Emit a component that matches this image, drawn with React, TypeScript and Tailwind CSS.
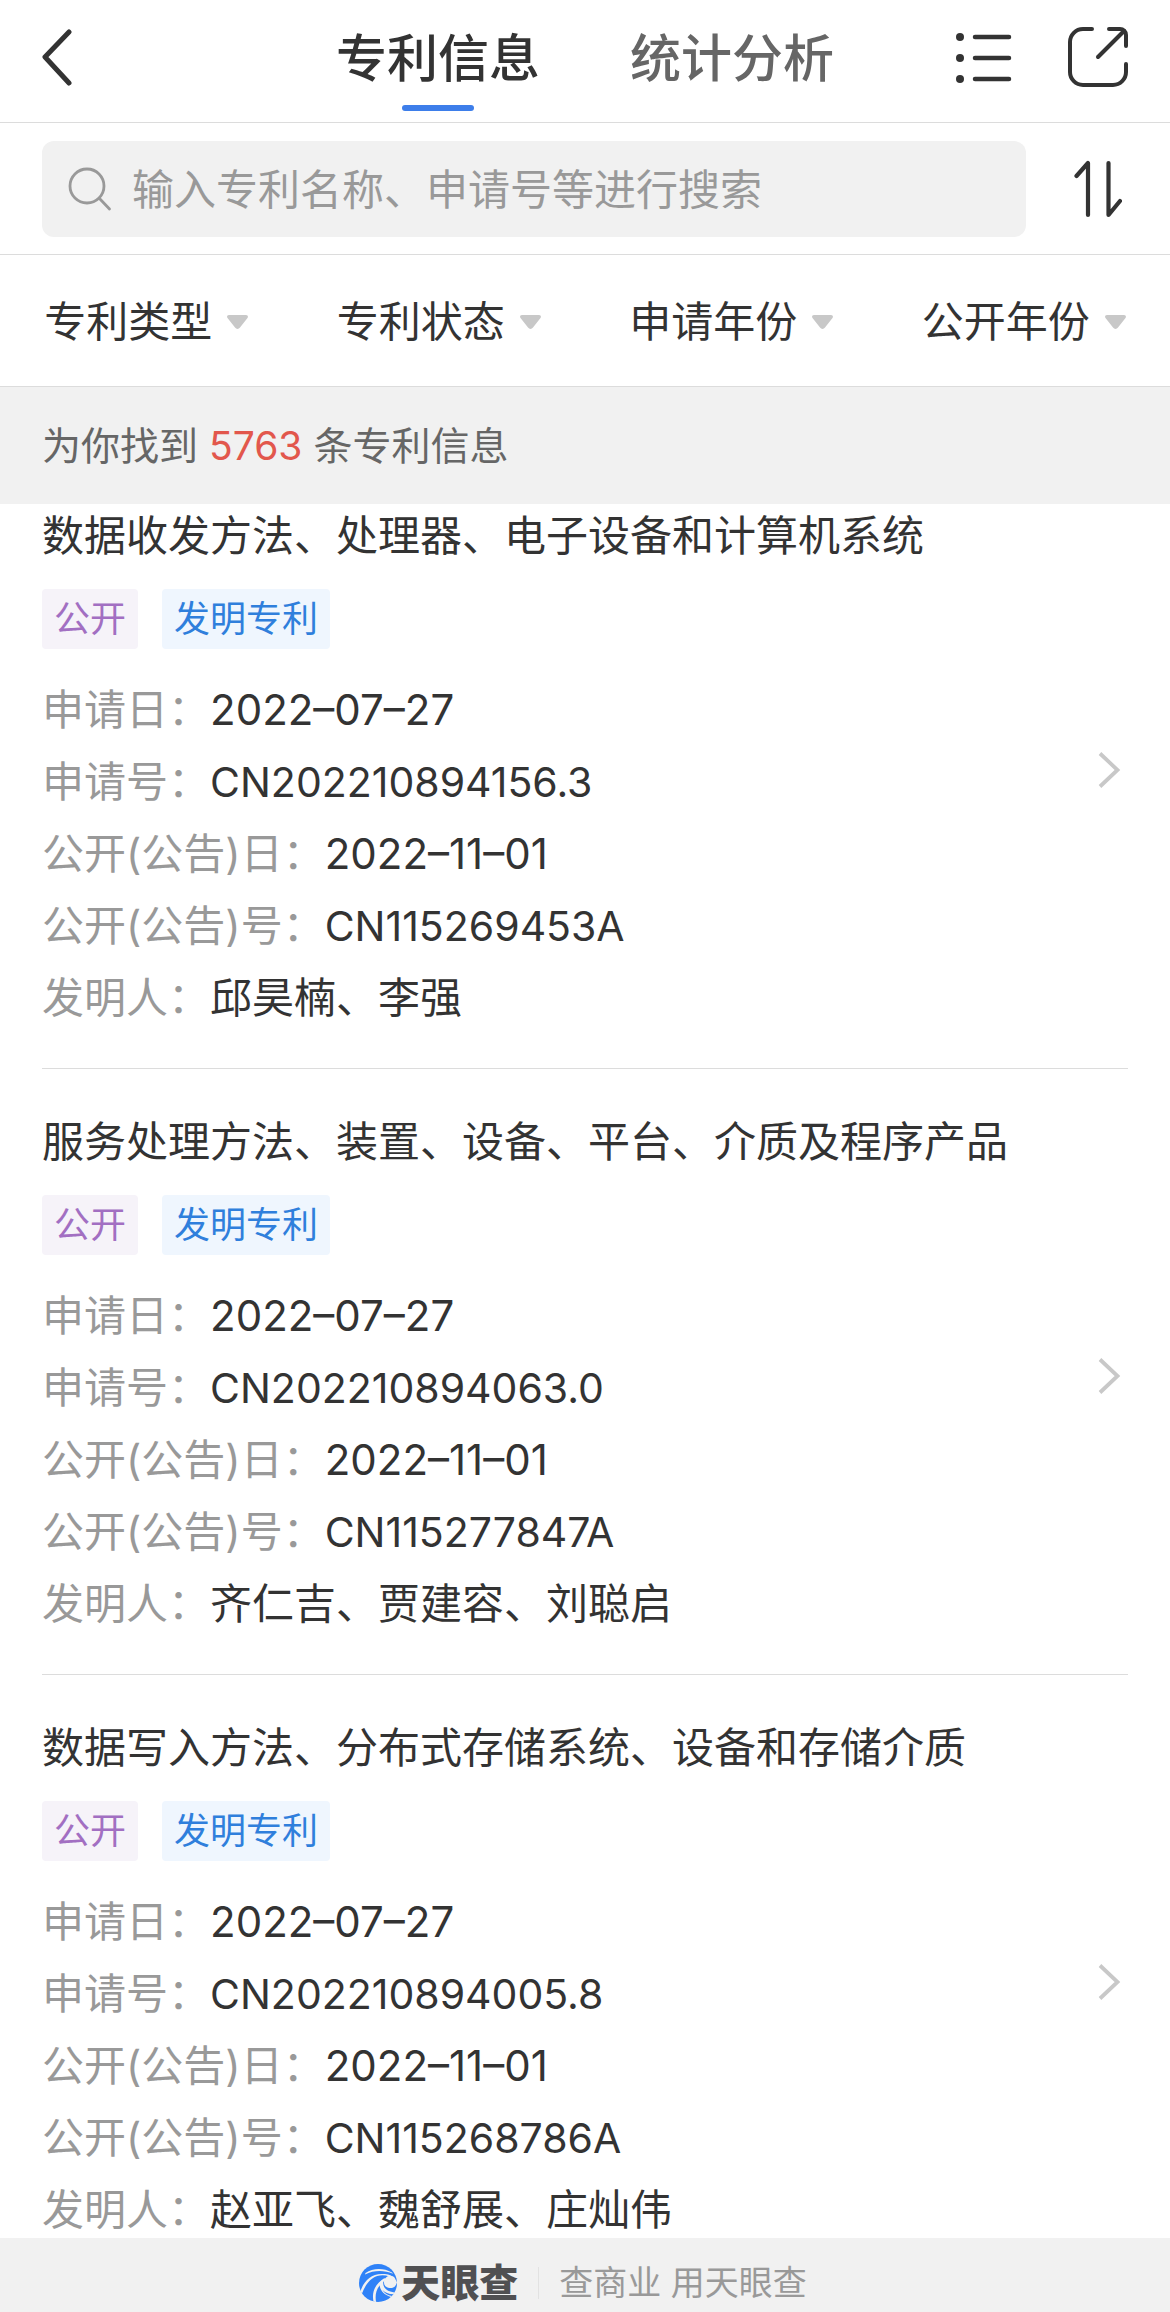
import React, { useState } from 'react';
import clsx from 'clsx';

interface Patent {
  title: string;
  applyDate: string;
  applyNo: string;
  publishDate: string;
  publishNo: string;
  inventors: string;
}

const patents: Patent[] = [
  {
    title: '数据收发方法、处理器、电子设备和计算机系统',
    applyDate: '2022–07–27',
    applyNo: 'CN202210894156.3',
    publishDate: '2022–11–01',
    publishNo: 'CN115269453A',
    inventors: '邱昊楠、李强',
  },
  {
    title: '服务处理方法、装置、设备、平台、介质及程序产品',
    applyDate: '2022–07–27',
    applyNo: 'CN202210894063.0',
    publishDate: '2022–11–01',
    publishNo: 'CN115277847A',
    inventors: '齐仁吉、贾建容、刘聪启',
  },
  {
    title: '数据写入方法、分布式存储系统、设备和存储介质',
    applyDate: '2022–07–27',
    applyNo: 'CN202210894005.8',
    publishDate: '2022–11–01',
    publishNo: 'CN115268786A',
    inventors: '赵亚飞、魏舒展、庄灿伟',
  },
];

const filters = [
  { name: '专利类型', options: ['发明专利', '实用新型', '外观设计'] },
  { name: '专利状态', options: ['公开', '授权', '实质审查'] },
  { name: '申请年份', options: ['2022', '2021', '2020'] },
  { name: '公开年份', options: ['2022', '2021', '2020'] },
];

const tabs = ['专利信息', '统计分析'];

const BackIcon = () => (
  <svg className="w-8 h-[60px]" viewBox="0 0 32 60" fill="none" stroke="currentColor" strokeWidth="5" strokeLinecap="round" strokeLinejoin="round">
    <path d="M27 5 3 30l24 26" />
  </svg>
);

const ListIcon = () => (
  <svg className="w-14 h-[60px]" viewBox="0 0 56 60" fill="none" stroke="currentColor" strokeWidth="4.5" strokeLinecap="round">
    <path d="M19 10h34M19 31h34M19 52h34" />
    <g fill="currentColor" stroke="none">
      <circle cx="4" cy="10" r="4" />
      <circle cx="4" cy="31" r="4" />
      <circle cx="4" cy="52" r="4" />
    </g>
  </svg>
);

const ShareIcon = () => (
  <svg className="w-[60px] h-[60px]" viewBox="0 0 60 60" fill="none" stroke="currentColor" strokeWidth="4" strokeLinecap="round" strokeLinejoin="round">
    <path d="M24 2H15A13 13 0 0 0 2 15v30a13 13 0 0 0 13 13h30a13 13 0 0 0 13-13V37" />
    <path d="M41 2h11a6 6 0 0 1 6 6v11" />
    <path d="M56 4 30 30" />
  </svg>
);

const SearchIcon = () => (
  <svg className="w-11 h-11 shrink-0" viewBox="0 0 44 44" fill="none" stroke="currentColor" strokeWidth="2.8" strokeLinecap="round">
    <circle cx="19" cy="19" r="17" />
    <path d="m31.500 31.500 10 10.500" />
  </svg>
);

const SortIcon = () => (
  <svg className="w-12 h-[58px]" viewBox="0 0 48 58" fill="none" stroke="currentColor" strokeWidth="4.200" strokeLinecap="round" strokeLinejoin="round">
    <path d="M2.500 16 14 3v52" />
    <path d="M34.500 3v52l11.500-14" />
  </svg>
);

const CaretIcon = () => (
  <svg className="w-[21px] h-[14px] shrink-0 pointer-events-none" viewBox="0 0 21 12" preserveAspectRatio="none" fill="#c8c8c8">
    <path d="M2 0h17c2 0 2.500 1.500 1.300 2.800l-7.300 8c-1.400 1.600-3.600 1.600-5 0l-7.300-8C-.5 1.500 0 0 2 0z" />
  </svg>
);

const ChevronIcon = () => (
  <svg className="w-6 h-9 shrink-0" viewBox="0 0 24 36" fill="none" stroke="#c8c8c8" strokeWidth="3.800">
    <path d="m2 1.500 17.500 16.500L2 34.500" />
  </svg>
);

const LogoIcon = () => (
  <svg className="w-[38px] h-[38px]" viewBox="0 0 38 38">
    <circle cx="19" cy="19" r="19" fill="#2f82f8" />
    <g fill="#f1f1f1">
      <path d="M38 18.500c-1.500 4.500-4 6-7.500 5.500-4-.5-6-3-5.500-6.500.4-3 2.500-5.500 6-5.800 2.500 0 4.500 1 5.300 3.300z" />
      <path d="M1.500 27C5 17 12 9.500 24 10c5 .2 9 1 10.500 4l-4-1.500C18 8.500 8.500 15 3 29.500z" />
      <path d="M6.500 9C14 4 24 3.500 33 8.500l1 1.300C25 6 15 6 6 10.500z" />
      <path d="M14.500 37.500C12.500 28 16 20 25.500 14l1 2C18.500 22 15.500 28 17 38z" />
      <path d="M32 33c-7-2-12-7-11.500-14.500l4-3C23 23 26.500 27 35.500 28.500l-1 1.800c-5-.3-8.500-1.600-11-4.300 2 3.500 5 5 9.500 6z" />
    </g>
  </svg>
);

const Field: React.FC<{ label: string; value: string; valueClass?: string }> = ({ label, value, valueClass }) => (
  <div className="flex">
    <dt className="text-[#999]">{label}：</dt>
    <dd className={valueClass}>{value}</dd>
  </div>
);

const PatentItem: React.FC<{ patent: Patent }> = ({ patent }) => (
  <li className="border-b border-[#dcdcdc]">
    <a href="#" className="flex items-center justify-between pt-[43px] pr-1.5 pb-[34px]">
      <div>
        <h2 className="text-[42px] leading-[60px]">{patent.title}</h2>
        <div className="mt-[23px] flex gap-6 text-4xl leading-[60px]">
          <span className="rounded-sm bg-[#f6f3f9] px-3 text-[#a26fc2]">公开</span>
          <span className="rounded-sm bg-[#eff6fe] px-3 text-[#2f7fdc]">发明专利</span>
        </div>
        <dl className="mt-[25px] text-[42px] leading-[72px]">
          <Field label="申请日" value={patent.applyDate} />
          <Field label="申请号" value={patent.applyNo} valueClass="text-[41px]" />
          <Field label="公开(公告)日" value={patent.publishDate} />
          <Field label="公开(公告)号" value={patent.publishNo} valueClass="text-[41px]" />
          <Field label="发明人" value={patent.inventors} />
        </dl>
      </div>
      <ChevronIcon />
    </a>
  </li>
);

const App: React.FC = () => {
  const [activeTab, setActiveTab] = useState(tabs[0]);
  const [keyword, setKeyword] = useState('');

  return (
    <div className="flex h-screen flex-col bg-white font-[Inter,'Noto_Sans_CJK_SC',sans-serif] text-[#333]">
      {/* Header */}
      <header className="flex h-[123px] shrink-0 justify-between border-b border-[#dcdcdc] px-[42px]">
        <div className="flex w-[172px] items-center pb-2">
          <button type="button" aria-label="返回"><BackIcon /></button>
        </div>
        <nav className="flex gap-[90px]">
          {tabs.map(tab => (
            <button
              key={tab}
              type="button"
              onClick={() => setActiveTab(tab)}
              className={clsx(
                'flex flex-col items-center pt-[22px] text-[51px] leading-[74px] font-medium',
                tab !== activeTab && 'text-[#666]'
              )}
            >
              {tab}
              {tab === activeTab && <span className="mt-[9px] h-[6px] w-[72px] rounded-full bg-[#3d7eea]" />}
            </button>
          ))}
        </nav>
        <div className="flex w-[172px] items-center justify-between pb-2">
          <button type="button" aria-label="列表"><ListIcon /></button>
          <button type="button" aria-label="分享"><ShareIcon /></button>
        </div>
      </header>

      {/* Search */}
      <div className="flex shrink-0 border-b border-[#dcdcdc] pt-[18px] pb-[17px] pl-[42px]">
        <label className="flex h-24 flex-1 items-center gap-5 rounded-xl bg-[#f1f1f1] px-[26px] text-[#999]">
          <SearchIcon />
          <input
            type="text"
            value={keyword}
            onChange={e => setKeyword(e.target.value)}
            aria-label="搜索专利"
            placeholder="输入专利名称、申请号等进行搜索"
            className="h-full flex-1 bg-transparent text-[42px] text-[#333] outline-none placeholder:text-[#999]"
          />
        </label>
        <button type="button" aria-label="排序" className="flex w-36 items-center justify-center">
          <SortIcon />
        </button>
      </div>

      {/* Filters */}
      <div className="grid h-[132px] shrink-0 grid-cols-4 border-b border-[#dcdcdc] pt-0.5">
        {filters.map(filter => (
          <label key={filter.name} className="flex items-center justify-center gap-3.5">
            <select aria-label={filter.name} className="appearance-none bg-transparent text-[42px] leading-[60px] outline-none">
              <option>{filter.name}</option>
              {filter.options.map(option => (
                <option key={option}>{option}</option>
              ))}
            </select>
            <CaretIcon />
          </label>
        ))}
      </div>

      <p className="shrink-0 bg-[#f1f1f1] px-[42px] text-[39px] leading-[117px] text-[#666]">
        为你找到 <span className="text-[#e2574c]">5763</span> 条专利信息
      </p>

      {/* Result list, scrolled a little under the bar above */}
      <main className="min-h-0 flex-1 overflow-hidden px-[42px]">
        <ul className="-mt-[41px]">
          {patents.map(patent => (
            <PatentItem key={patent.applyNo} patent={patent} />
          ))}
        </ul>
      </main>

      {/* Footer */}
      <footer className="flex h-[74px] shrink-0 items-center justify-center bg-[#f1f1f1] pt-4 pr-1">
        <LogoIcon />
        <span className="ml-1 text-[39px] leading-[58px] font-black text-[#505052]">天眼查</span>
        <span className="mx-5 h-8 w-px bg-[#e2e2e2]" />
        <span className="text-[34px] leading-[58px] text-[#999]">查商业 用天眼查</span>
      </footer>
    </div>
  );
};

export default App;
